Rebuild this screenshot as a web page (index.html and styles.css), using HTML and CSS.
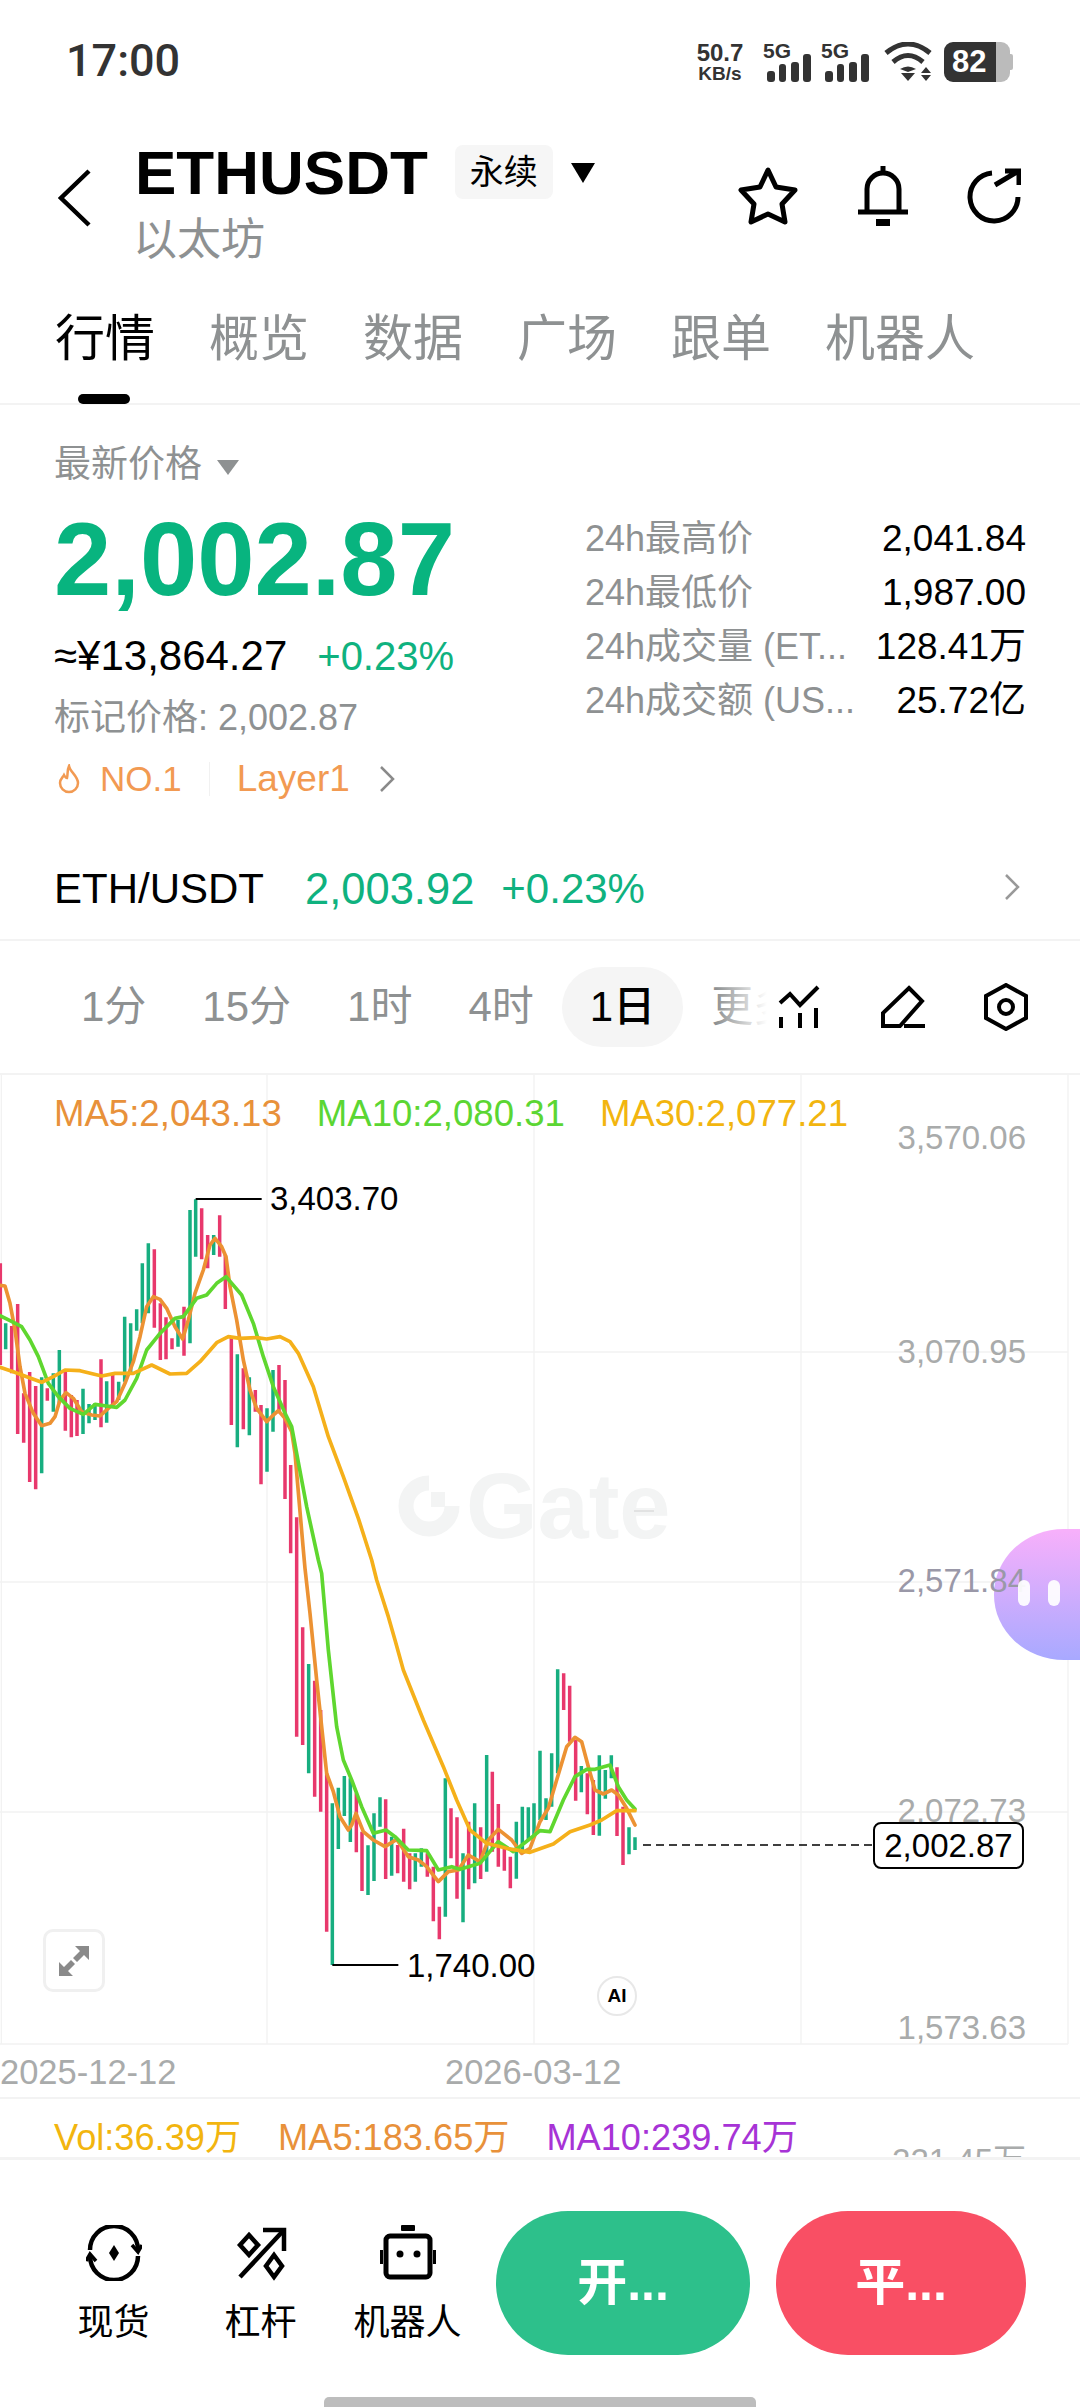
FILE: index.html
```html
<!DOCTYPE html>
<html>
<head>
    <title>ETHUSDT</title>
    <link rel="stylesheet" href="styles.css">
</head>
<body>
<div class="page">

    <div class="status">
        <span class="time">17:00</span>
        <div class="status-icons">
            <div class="speed"><b>50.7</b><b class="unit">KB/s</b></div>
            <svg class="sig" width="48" height="40" viewBox="0 0 48 40"><text x="-1" y="16" class="sig-text">5G</text><rect x="3" y="29" width="8" height="11" rx="3"/><rect x="15" y="22" width="7" height="18" rx="3"/><rect x="27" y="20" width="8" height="20" rx="3"/><rect x="39" y="12" width="8" height="28" rx="3"/></svg>
            <svg class="sig" width="48" height="40" viewBox="0 0 48 40"><text x="-1" y="16" class="sig-text">5G</text><rect x="3" y="29" width="8" height="11" rx="3"/><rect x="15" y="22" width="7" height="18" rx="3"/><rect x="27" y="20" width="8" height="20" rx="3"/><rect x="39" y="12" width="8" height="28" rx="3"/></svg>
            <svg class="wifi" width="48" height="40" viewBox="0 0 48 40"><path d="M2 11 Q24 -7 46 11 M9 20 Q24 7 39 20" fill="none" stroke="#333" stroke-width="5"/><path d="M16 27 Q24 22 32 27 L24 30 Z" fill="#333"/><path d="M17 31 H31 L24 39 Z M37 31 H47 L42 25 Z M37 33 H47 L42 39 Z" fill="#333"/></svg>
            <div class="battery">82</div>
        </div>
    </div>

    <div class="head">
        <svg class="back" width="34" height="58" viewBox="0 0 34 58"><path d="M31 2 L3 29 L31 56" fill="none" stroke="#000" stroke-width="4.5"/></svg>
        <div class="title">
            <div class="title-row">
                <h1>ETHUSDT</h1>
                <span class="tag">永续</span>
                <span class="tri"></span>
            </div>
            <div class="cn-name">以太坊</div>
        </div>
        <div class="actions">
            <svg width="62" height="60" viewBox="0 0 62 60"><path d="M31 4 L39 21 L58 24 L45 38 L48 56 L31 48 L14 56 L17 38 L4 24 L23 21 Z" fill="none" stroke="#000" stroke-width="5" stroke-linejoin="round"/></svg>
            <svg width="52" height="62" viewBox="0 0 52 62"><path d="M10 46 V24 a16 16 0 0 1 32 0 V46" fill="none" stroke="#000" stroke-width="5"/><path d="M1 47 H51" stroke="#000" stroke-width="5"/><path d="M26 1 V8" stroke="#000" stroke-width="5"/><rect x="19" y="54" width="14" height="7"/></svg>
            <svg width="54" height="56" viewBox="0 0 54 56"><path d="M25 5 A24 24 0 1 0 51 29" fill="none" stroke="#000" stroke-width="5"/><path d="M28 17 L50 4 M38 3 H52 V17" fill="none" stroke="#000" stroke-width="5"/></svg>
        </div>
    </div>

    <div class="tabs">
        <span class="tab active">行情</span>
        <span class="tab">概览</span>
        <span class="tab">数据</span>
        <span class="tab">广场</span>
        <span class="tab">跟单</span>
        <span class="tab">机器人</span>
    </div>

    <div class="overview">
        <div class="left">
            <div class="latest">最新价格<span class="tri-grey"></span></div>
            <div class="price">2,002.87</div>
            <div class="sub"><span class="cny">≈¥13,864.27</span><span class="green">+0.23%</span></div>
            <div class="mark">标记价格: 2,002.87</div>
            <div class="hot">
                <svg width="24" height="30" viewBox="0 0 24 30"><path d="M12 2 C13 8 21 12 21 19 a9 9 0 0 1 -18 0 C3 15 6 13 7 11 C8 13 9 14 10 14 C11 10 10 6 12 2 Z" fill="none" stroke="#f29a52" stroke-width="2.5"/></svg>
                <span class="no">NO.1</span>
                <span class="hot-sep"></span>
                <span class="layer">Layer1</span>
                <svg class="hot-arrow" width="18" height="28" viewBox="0 0 18 28"><path d="M3 2 L15 14 L3 26" fill="none" stroke="#8a8a8a" stroke-width="2.5"/></svg>
            </div>
        </div>
        <div class="stats">
            <div class="stat"><span class="stat-name">24h最高价</span><span>2,041.84</span></div>
            <div class="stat"><span class="stat-name">24h最低价</span><span>1,987.00</span></div>
            <div class="stat"><span class="stat-name">24h成交量 (ET...</span><span>128.41万</span></div>
            <div class="stat"><span class="stat-name">24h成交额 (US...</span><span>25.72亿</span></div>
        </div>
    </div>

    <div class="ticker">
        <span class="pair">ETH/USDT</span>
        <span class="green spot">2,003.92</span>
        <span class="green">+0.23%</span>
        <svg class="ticker-arrow" width="16" height="26" viewBox="0 0 16 26"><path d="M2 1 L14 13 L2 25" fill="none" stroke="#999" stroke-width="2.5"/></svg>
    </div>

    <div class="periods">
        <div class="period-list">
            <span class="period">1分</span>
            <span class="period">15分</span>
            <span class="period">1时</span>
            <span class="period">4时</span>
            <span class="period current">1日</span>
            <span class="period">更多</span>
        </div>
        <div class="tools">
            <svg width="46" height="44" viewBox="0 0 46 44" fill="none" stroke="#000" stroke-width="4"><path d="M4 18 L14 9 L24 20 L42 2"/><path d="M5 32 V43 M24 28 V43 M40 23 V43"/></svg>
            <svg width="46" height="44" viewBox="0 0 46 44" fill="none" stroke="#000" stroke-width="4"><path d="M29 3 L42 16 L20 41 H3 V28 Z"/><path d="M24 41 H45"/></svg>
            <svg width="44" height="48" viewBox="0 0 44 48" fill="none" stroke="#000" stroke-width="4"><path d="M22 2 L42 13 V35 L22 46 L2 35 V13 Z"/><circle cx="22" cy="24" r="7"/></svg>
        </div>
    </div>

    <div class="chart">
        <div class="watermark">
            <svg width="62" height="62" viewBox="0 0 62 62"><path d="M31 8 A23 23 0 1 0 54 31" fill="none" stroke="#f3f4f4" stroke-width="15"/><rect x="33" y="17" width="14" height="15" fill="#f3f4f4"/></svg>
            <span>Gate</span>
        </div>

        <svg class="plot" width="1080" height="1023" viewBox="0 -255 3240 3069">
            <g class="grid">
                <path d="M0 576 H3204 M0 1266 H3204 M0 1956 H3204 M0 2652 H3204"/>
                <path d="M4 -255 V2652 M801 -255 V2652 M1602 -255 V2652 M2403 -255 V2652 M3204 -255 V2652"/>
            </g>
            <path d="M1902 1053 H1962" stroke="#d0d0d0" stroke-width="3"/>
            <path class="bars-red" d="M1 310V615 M35 498V640 M53 432V822 M71 700V848 M89 636V966 M107 678V988 M142 685V722 M196 636V812 M214 705V832 M231 720V828 M303 598V802 M338 645V740 M463 268V503 M481 430V600 M498 472V598 M516 535V568 M552 440V587 M605 145V298 M623 225V325 M659 166V290 M676 285V447 M694 530V795 M730 625V808 M766 690V755 M783 735V973 M837 615V760 M855 660V1017 M872 915V1180 M890 1072V1730 M908 1402V1755 M944 1562V1910 M962 1650V1955 M980 1840V2315 M1069 1900V2077 M1086 2015V2193 M1157 1918V2157 M1193 2055V2140 M1211 2006V2165 M1229 2080V2188 M1282 2080V2150 M1300 2120V2284 M1318 2240V2338 M1353 1945V2095 M1371 1972V2216 M1406 1985V2188 M1442 2002V2157 M1477 1835V2075 M1495 1932V2120 M1513 2060V2132 M1531 2090V2185 M1691 1540V1650 M1709 1577V1745 M1727 1740V1922 M1762 1840V1963 M1780 1860V2025 M1851 1822V2028 M1869 1940V2115"/>
            <path class="bars-green" d="M17 490V568 M125 652V940 M160 640V755 M178 570V730 M249 686V822 M267 732V790 M285 730V780 M320 664V788 M356 665V720 M374 470V665 M392 490V640 M410 448V512 M427 310V490 M445 250V460 M534 480V560 M570 150V550 M587 118V290 M641 225V285 M712 583V862 M748 652V826 M801 745V935 M819 630V815 M926 1512V1840 M997 1930V2415 M1015 1883V2067 M1033 1848V1968 M1051 1855V2046 M1104 2056V2205 M1122 1960V2163 M1140 1912V2000 M1175 2030V2147 M1246 2080V2165 M1264 2065V2120 M1336 1855V2270 M1389 2080V2287 M1424 1930V2170 M1460 1785V2135 M1549 1985V2156 M1567 1940V2080 M1585 1942V2040 M1602 1930V2030 M1620 1772V1980 M1638 1915V1980 M1655 1780V1940 M1673 1528V1840 M1744 1818V1897 M1798 1786V2027 M1816 1830V1916 M1834 1786V1855 M1887 2002V2083 M1905 2032V2070"/>
            <polyline class="ma ma5" points="0,376 15,378 30,430 45,510 60,620 75,700 100,760 125,797 150,790 165,770 180,720 198,698 220,715 245,755 275,765 300,768 325,745 350,725 375,670 400,605 420,530 440,440 460,410 480,418 500,445 525,500 548,537 565,480 585,400 610,330 630,255 645,235 665,260 678,290 690,380 710,480 730,600 750,690 770,745 800,785 820,765 835,752 855,775 875,815 885,880 897,1020 910,1170 915,1225 930,1360 950,1560 965,1700 980,1840 1000,1895 1020,1970 1045,2010 1055,1995 1068,1960 1090,2015 1120,2040 1155,2060 1190,2038 1225,2090 1255,2100 1280,2120 1315,2165 1345,2135 1375,2130 1405,2085 1440,2105 1465,2040 1495,2008 1535,2040 1565,2080 1590,2065 1620,1985 1645,1945 1670,1860 1700,1760 1725,1732 1745,1745 1765,1820 1785,1890 1810,1902 1835,1890 1855,1905 1880,1945 1905,1995"/>
            <polyline class="ma ma10" points="0,467 30,482 65,500 90,540 115,590 145,670 175,710 210,745 250,763 285,733 320,738 350,742 375,720 410,655 440,570 480,520 525,475 550,470 590,415 620,405 650,370 678,350 725,405 760,490 790,590 820,680 860,770 875,800 890,880 920,1040 955,1200 965,1240 985,1470 1010,1700 1030,1800 1055,1860 1085,1940 1120,2020 1158,2010 1185,2030 1225,2070 1280,2072 1315,2130 1355,2120 1380,2128 1440,2110 1465,2080 1495,2045 1540,2075 1585,2040 1620,2012 1650,2015 1690,1920 1725,1850 1760,1828 1785,1828 1830,1815 1855,1880 1880,1920 1905,1947"/>
            <polyline class="ma ma30" points="0,622 40,635 80,650 125,667 160,650 195,630 240,632 305,648 345,640 400,640 455,615 510,642 560,640 600,605 650,548 685,530 720,535 770,533 800,537 840,530 870,545 895,580 940,680 985,830 1030,950 1075,1075 1115,1200 1130,1260 1165,1370 1185,1440 1210,1530 1270,1680 1330,1820 1370,1920 1410,2010 1460,2050 1520,2065 1590,2077 1660,2052 1710,2015 1770,1995 1805,1980 1850,1952 1905,1952"/>
            <path class="leader" d="M587 117 H785 M997 2415 H1195"/>
            <path class="dashed" d="M1929 2055 H2622"/>
        </svg>

        <div class="ma-legend">
            <span class="c-ma5">MA5:2,043.13</span>
            <span class="c-ma10">MA10:2,080.31</span>
            <span class="c-ma30">MA30:2,077.21</span>
        </div>

        <div class="blob"></div>

        <span class="axis axis-1">3,570.06</span>
        <span class="axis axis-2">3,070.95</span>
        <span class="axis axis-3">2,571.84</span>
        <span class="axis axis-4">2,072.73</span>
        <span class="axis axis-5">1,573.63</span>

        <div class="blob-eyes"><i></i><i></i></div>

        <span class="note note-high">3,403.70</span>
        <span class="note note-low">1,740.00</span>
        <span class="last-price">2,002.87</span>

        <span class="date date-1">2025-12-12</span>
        <span class="date date-2">2026-03-12</span>

        <div class="expand">
            <svg width="34" height="34" viewBox="0 0 34 34" fill="#8a8a8a"><path d="M18 2 H32 V16 L27 11 L20 18 L16 14 L23 7 Z M2 32 V18 L7 23 L14 16 L18 20 L11 27 L16 32 Z"/></svg>
        </div>
        <span class="ai">AI</span>
    </div>

    <div class="vol">
        <span class="c-ma30">Vol:36.39万</span>
        <span class="c-ma5">MA5:183.65万</span>
        <span class="c-purple">MA10:239.74万</span>
        <span class="vol-axis">221.45万</span>
    </div>

    <div class="bottom">
        <div class="bottom-row">
            <div class="tool">
                <svg width="56" height="56" viewBox="0 0 56 56" fill="none" stroke="#000" stroke-width="4.5"><path d="M4 25 A24 24 0 0 1 52 25"/><path d="M52 31 A24 24 0 0 1 4 31"/><path d="M46 20 L52 27 L56 20" stroke-width="3.5"/><path d="M10 36 L4 29 L0 36" stroke-width="3.5"/><path d="M28 20 L33 28 L28 36 L23 28 Z" fill="#000" stroke="none"/></svg>
                <span>现货</span>
            </div>
            <div class="tool">
                <svg width="56" height="56" viewBox="0 0 56 56" fill="none" stroke="#000" stroke-width="4.5"><path d="M7 52 L50 6"/><path d="M30 5 H51 V26"/><path d="M16 10 L25 20 L16 30 L7 20 Z"/><path d="M41 30 L49 41 L41 52 L33 41 Z"/></svg>
                <span>杠杆</span>
            </div>
            <div class="tool">
                <svg width="56" height="56" viewBox="0 0 56 56"><rect x="6" y="11" width="44" height="41" rx="4" fill="none" stroke="#000" stroke-width="5"/><rect x="21" y="0" width="14" height="6" rx="1"/><rect x="0" y="25" width="3" height="14"/><rect x="53" y="25" width="3" height="14"/><circle cx="20" cy="29" r="3.5"/><circle cx="37" cy="29" r="3.5"/></svg>
                <span>机器人</span>
            </div>
            <div class="btn btn-open">开...</div>
            <div class="btn btn-close">平...</div>
        </div>
        <div class="home-bar"></div>
    </div>

</div>
</body>
</html>
```

FILE: styles.css
```css
* { box-sizing: border-box; }
html, body { margin: 0; padding: 0; background: #fff; }
body { font-family: "Liberation Sans", "Noto Sans CJK SC", sans-serif; color: #000; }
.page { width: 1080px; height: 2408px; overflow: hidden; display: flex; flex-direction: column; background: #fff; }

/* status bar */
.status { height: 122px; flex: none; display: flex; justify-content: space-between; align-items: flex-start; padding: 38px 70px 0 66px; color: #333; }
.time { font-family: Roboto, sans-serif; font-size: 45px; font-weight: 500; line-height: 46px; }
.status-icons { display: flex; align-items: flex-start; padding-top: 4px; }
.speed { display: flex; flex-direction: column; align-items: center; width: 50px; margin-right: 19px; }
.speed b { font-size: 24px; line-height: 22px; }
.speed .unit { font-size: 19px; line-height: 20px; }
.sig { margin-right: 10px; fill: #333; overflow: visible; }
.sig-text { font-size: 21px; font-weight: 700; fill: #333; }
.sig + .wifi { margin-left: 4px; }
.wifi { margin-right: 12px; }
.battery { position: relative; width: 66px; height: 40px; border-radius: 9px; background: linear-gradient(90deg, #333 79%, #bbb 79%); color: #fff; font-size: 31px; font-weight: 700; line-height: 40px; padding-left: 8px; }
.battery::after { content: ""; position: absolute; left: 66px; top: 12px; width: 3px; height: 16px; background: #bbb; border-radius: 0 2px 2px 0; }

/* header */
.head { height: 156px; flex: none; display: flex; align-items: flex-start; padding: 16px 59px 0 58px; }
.back { margin-top: 31px; flex: none; }
.title { margin-left: 43px; }
.title-row { display: flex; align-items: center; height: 70px; }
h1 { margin: 0; font-size: 62px; line-height: 70px; font-weight: 700; }
.tag { margin-left: 27px; width: 98px; height: 54px; border-radius: 8px; background: #f6f6f6; font-size: 34px; line-height: 54px; text-align: center; margin-top: -2px; }
.tri { margin: 0 0 0 18px; border-left: 12px solid transparent; border-right: 12px solid transparent; border-top: 20px solid #000; }
.cn-name { margin: 4px 0 0 -2px; font-size: 44px; line-height: 56px; color: #8e9192; }
.actions { margin-left: auto; display: flex; align-items: center; gap: 58px; margin-top: 27px; }

/* tabs */
.tabs { height: 127px; flex: none; display: flex; gap: 54px; padding: 33px 55px 0; border-bottom: 2px solid #f3f3f3; }
.tab { position: relative; font-size: 50px; line-height: 56px; color: #8e9192; height: 56px; }
.tab.active { color: #000; }
.tab.active::after { content: ""; position: absolute; left: 23px; top: 83px; width: 52px; height: 10px; border-radius: 5px; background: #000; }

/* price block */
.overview { height: 434px; flex: none; display: flex; justify-content: space-between; padding: 0 54px; }
.left { padding-top: 38px; }
.latest { display: flex; align-items: center; font-size: 37px; line-height: 44px; color: #8e9192; }
.tri-grey { margin: 4px 0 0 15px; border-left: 11px solid transparent; border-right: 11px solid transparent; border-top: 15px solid #8e9192; }
.price { margin-top: 18px; font-size: 103px; font-weight: 700; line-height: 110px; color: #08b47f; }
.sub { margin-top: 18px; display: flex; align-items: center; gap: 30px; font-size: 40px; line-height: 46px; }
.cny { font-size: 42px; }
.green { color: #0fb27f; }
.mark { margin-top: 17px; font-size: 36px; line-height: 44px; color: #8e9192; }
.hot { margin-top: 17px; display: flex; align-items: center; height: 44px; color: #f29a52; font-size: 35px; padding-left: 3px; }
.no { margin-left: 19px; }
.layer { font-size: 37px; }
.hot-sep { width: 1px; height: 34px; background: #f1f1f1; margin: 0 27px 0 27px; }
.hot-arrow { margin-left: 28px; }
.stats { width: 441px; padding-top: 107px; }
.stat { display: flex; justify-content: space-between; height: 54px; line-height: 54px; font-size: 37px; }
.stat-name { color: #8e9192; font-size: 36px; }

/* spot ticker */
.ticker { height: 102px; flex: none; display: flex; align-items: center; padding: 0 60px 0 54px; font-size: 42px; border-bottom: 2px solid #f3f3f3; }
.pair { margin-right: 41px; font-size: 42px; }
.spot { font-size: 43.5px; margin-right: 27px; }
.ticker-arrow { margin-left: auto; margin-top: -4px; }

/* period switcher */
.periods { height: 134px; flex: none; display: flex; align-items: center; padding-left: 53px; padding-right: 52px; border-bottom: 2px solid #f3f3f3; }
.period-list { position: relative; width: 723px; flex: none; display: flex; overflow: hidden; font-size: 42px; color: #8e9192; }
.period-list::after { content: ""; position: absolute; right: 0; top: 0; bottom: 0; width: 60px; background: linear-gradient(90deg, rgba(255,255,255,0), #fff 85%); }
.period { flex: none; height: 80px; line-height: 80px; padding: 0 28px; border-radius: 40px; white-space: nowrap; }
.period.current { background: #f5f5f5; color: #000; font-weight: 500; }
.tools { display: flex; align-items: center; justify-content: space-between; flex: 1; }

/* chart */
.chart { position: relative; height: 1024px; flex: none; border-bottom: 2px solid #f3f3f3; }
.plot { position: absolute; left: 0; top: 0; }
.grid path { fill: none; stroke: #f2f2f2; stroke-width: 4; }
.bars-red { fill: none; stroke: #e8386c; stroke-width: 10.5; }
.bars-green { fill: none; stroke: #17ae80; stroke-width: 10.5; }
.ma { fill: none; stroke-width: 11; stroke-linejoin: round; stroke-linecap: round; }
.ma5 { stroke: #ec9233; }
.ma10 { stroke: #5fd72f; }
.ma30 { stroke: #f5b01a; }
.leader { fill: none; stroke: #000; stroke-width: 6; }
.dashed { fill: none; stroke: #000; stroke-width: 5; stroke-dasharray: 24 15; }
.watermark { position: absolute; left: 398px; top: 400px; display: flex; align-items: center; gap: 6px; color: #f3f4f4; font-size: 92px; font-weight: 700; line-height: 62px; }
.ma-legend { position: relative; display: flex; gap: 35px; padding: 19px 0 0 54px; font-size: 36.6px; line-height: 40px; }
.c-ma5 { color: #e8913a; }
.c-ma10 { color: #5bd633; }
.c-ma30 { color: #f2b50f; }
.c-purple { color: #a733d6; }
.axis { position: absolute; right: 54px; font-size: 33px; line-height: 40px; color: #a9abab; }
.axis-1 { top: 43px; }
.axis-2 { top: 257px; }
.axis-3 { top: 486px; color: #9a98a8; }
.axis-4 { top: 716px; }
.axis-5 { top: 933px; }
.note { position: absolute; font-size: 33px; line-height: 40px; }
.note-high { left: 270px; top: 104px; }
.note-low { left: 407px; top: 871px; }
.last-price { position: absolute; left: 873px; top: 747px; width: 151px; height: 47px; border: 2px solid #000; border-radius: 8px; background: #fff; font-size: 33px; line-height: 43px; text-align: center; }
.date { position: absolute; top: 977px; font-size: 34.5px; line-height: 40px; color: #a9abab; }
.date-1 { left: 0; }
.date-2 { left: 445px; }
.expand { position: absolute; left: 43px; top: 854px; width: 62px; height: 63px; border: 3px solid #f0f0f0; border-radius: 10px; display: flex; align-items: center; justify-content: center; background: #fff; }
.ai { position: absolute; left: 597px; top: 901px; width: 40px; height: 40px; border: 2px solid #e8e8e8; border-radius: 50%; background: #fff; font-size: 19px; font-weight: 700; line-height: 36px; text-align: center; }
.blob { position: absolute; right: 0; top: 454px; width: 86px; height: 131px; border-radius: 70px 0 0 70px / 65px 0 0 65px; background: linear-gradient(180deg, #f8b0fb, #a8a9ff); }
.blob-eyes { position: absolute; right: 0; top: 505px; width: 86px; display: flex; gap: 18px; padding-left: 24px; }
.blob-eyes i { width: 12px; height: 26px; border-radius: 6px; background: #fff; opacity: .92; }

/* volume legend */
.vol { position: relative; height: 58px; flex: none; overflow: hidden; display: flex; gap: 37px; padding: 19px 0 0 54px; font-size: 36.2px; line-height: 40px; }
.vol-axis { position: absolute; right: 54px; top: 42px; font-size: 33px; color: #a9abab; }

/* bottom bar */
.bottom { flex: 1; display: flex; flex-direction: column; border-top: 3px solid #f3f3f3; background: #fff; padding-top: 51px; }
.bottom-row { display: flex; height: 144px; padding-left: 40px; }
.tool { width: 147px; flex: none; display: flex; flex-direction: column; align-items: center; padding-top: 14px; font-size: 36px; line-height: 44px; }
.tool svg { margin-bottom: 20px; }
.btn { height: 144px; border-radius: 72px; color: #fff; font-size: 50px; font-weight: 700; line-height: 144px; text-align: center; }
.btn-open { width: 254px; margin-left: 15px; background: #2dc08b; }
.btn-close { width: 250px; margin-left: 26px; background: #f94f64; }
.home-bar { width: 432px; height: 10px; margin: 42px auto 0; border-radius: 5px 5px 0 0; background: #bdbdbd; }
```
